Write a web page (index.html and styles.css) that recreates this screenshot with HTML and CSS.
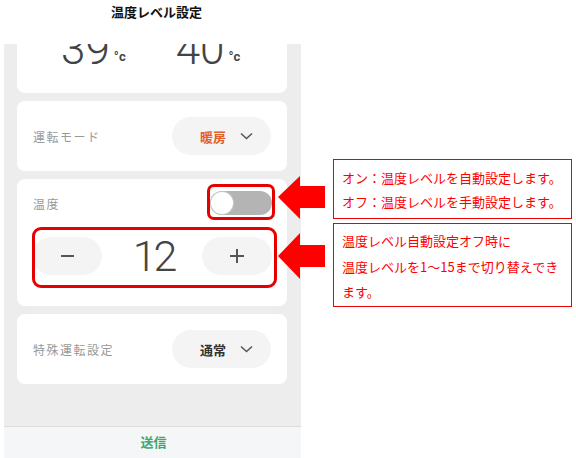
FILE: index.html
```html
<!DOCTYPE html>
<html lang="ja">
<head>
<meta charset="UTF-8">
<meta name="viewport" content="width=device-width, initial-scale=1.0">
<title>温度レベル設定</title>
<link rel="stylesheet" href="styles.css">
</head>
<body>

<div class="page">
  <div class="left">
    <h1 class="title">温度レベル設定</h1>

    <div class="phone">
      <div class="screen">
        <div class="card temps">
          <div class="temp"><span class="num">39</span><span class="unit">°c</span></div>
          <div class="temp"><span class="num">40</span><span class="unit">°c</span></div>
        </div>

        <div class="card row">
          <span class="label">運転モード</span>
          <div class="select">
            <span class="value heat">暖房</span>
            <svg class="chev" width="13" height="8" viewBox="0 0 13 8"><path d="M1 1.5 L6.5 6.5 L12 1.5" fill="none" stroke="#555" stroke-width="1.5"/></svg>
          </div>
        </div>

        <div class="card level">
          <div class="level-head">
            <span class="label">温度</span>
            <div class="mark mark-toggle">
              <div class="toggle"><span class="knob"></span></div>
            </div>
          </div>
          <div class="mark mark-stepper">
            <div class="stepper">
              <button class="step"><span class="minus"></span></button>
              <span class="num">12</span>
              <button class="step"><span class="plus"></span></button>
            </div>
          </div>
        </div>

        <div class="card row">
          <span class="label">特殊運転設定</span>
          <div class="select">
            <span class="value">通常</span>
            <svg class="chev" width="13" height="8" viewBox="0 0 13 8"><path d="M1 1.5 L6.5 6.5 L12 1.5" fill="none" stroke="#555" stroke-width="1.5"/></svg>
          </div>
        </div>
      </div>

      <div class="send">送信</div>
    </div>
  </div>

  <div class="notes">
    <div class="note note-1">オン：温度レベルを自動設定します。<br>オフ：温度レベルを手動設定します。</div>
    <div class="note note-2">温度レベル自動設定オフ時に<br>温度レベルを1～15まで切り替えでき<br>ます。</div>
  </div>

  <!-- annotation arrows -->
  <svg class="arrows" width="56" height="112" viewBox="0 0 56 112">
    <polygon points="2,25 24,4 24,14 49,14 49,36 24,36 24,47" fill="#f00"/>
    <polygon points="2,84 24,61 24,73 49,73 49,95 24,95 24,107" fill="#f00"/>
  </svg>
</div>

</body>
</html>
```

FILE: styles.css
```css
* { margin: 0; padding: 0; box-sizing: border-box; }
body { font-family: "Noto Sans CJK JP", sans-serif; background: #fff; color: #333; }
.page { position: relative; width: 576px; height: 458px; display: flex; }

.left { width: 305px; display: flex; flex-direction: column; }
.title { height: 44px; padding: 3px 0 0 8px; font-size: 13px; line-height: 18px; font-weight: bold; text-align: center; color: #111; }

.phone { margin-left: 4px; width: 297px; flex: 1; background: #ededee; display: flex; flex-direction: column; overflow: hidden; }
.screen { flex: 1; padding: 0 14px 0 13px; display: flex; flex-direction: column; gap: 8px; overflow: hidden; }
.card { background: #fff; border-radius: 8px; }

.temps { height: 49px; border-radius: 0 0 8px 8px; display: flex; align-items: flex-start; padding-left: 44px; gap: 50px; }
.temp { margin-top: -17px; display: flex; align-items: baseline; }
.num { font-family: Roboto, sans-serif; font-weight: 300; font-size: 44px; line-height: 44px; color: #444; }
.unit { font-family: Roboto, sans-serif; font-weight: bold; font-size: 13px; color: #444; margin-left: 4px; position: relative; top: -3px; }

.row { height: 70px; display: flex; align-items: center; justify-content: space-between; padding: 0 16px; }
.label { font-size: 12px; color: #999; letter-spacing: 1.5px; }
.select { width: 99px; height: 38px; border-radius: 19px; background: #f4f4f5; display: flex; align-items: center; padding-left: 28px; gap: 14px; }
.value { font-size: 13px; font-weight: bold; color: #333; }
.value.heat { color: #e0602a; }
.chev { display: block; }

.level { height: 127px; padding: 12px 15px 0 15px; }
.level-head { height: 24px; display: flex; align-items: center; justify-content: space-between; padding-left: 1px; }
.toggle { width: 62px; height: 24px; border-radius: 12px; background: #b4b4b4; padding: 1px; }
.knob { display: block; width: 22px; height: 22px; border-radius: 50%; background: #fff; box-shadow: 0 0 0 1px #c8c8c8; }

.mark { position: relative; }
.mark::after { content: ""; position: absolute; border: 3px solid #e60000; pointer-events: none; }
.mark-toggle::after { left: -3px; right: -3px; top: -7px; bottom: -5px; border-radius: 7px; }
.mark-stepper { margin-top: 22px; }
.mark-stepper::after { left: 0; right: -5px; top: -10px; bottom: -13px; border-radius: 9px; }

.stepper { display: flex; align-items: center; justify-content: space-between; height: 38px; }
.stepper .num { line-height: 38px; font-size: 43px; letter-spacing: -3px; margin-right: -3px; }
.step { width: 70px; height: 38px; border: none; border-radius: 19px; background: #f4f4f5; display: flex; align-items: center; justify-content: center; position: relative; }
.minus { width: 13px; height: 1.5px; background: #555; }
.plus { width: 14px; height: 14px; position: relative; }
.plus::before, .plus::after { content: ""; position: absolute; background: #555; }
.plus::before { left: 0; top: 6.25px; width: 14px; height: 1.5px; }
.plus::after { top: 0; left: 6.25px; width: 1.5px; height: 14px; }

.send { height: 32px; border-top: 1px solid #dcdcdc; background: #f5f6f7; text-align: center; font-size: 13px; font-weight: bold; color: #3aa870; line-height: 30px; padding-left: 2px; }

.notes { padding: 159px 0 0 28px; display: flex; flex-direction: column; gap: 4px; }
.note { width: 239px; border: 1px solid #e00; color: #f00; font-size: 13px; padding-left: 8px; }
.note-1 { height: 60px; line-height: 24px; padding-top: 6px; }
.note-2 { height: 84px; line-height: 25.5px; padding-top: 4px; }

.arrows { position: absolute; left: 276px; top: 172px; }
```
